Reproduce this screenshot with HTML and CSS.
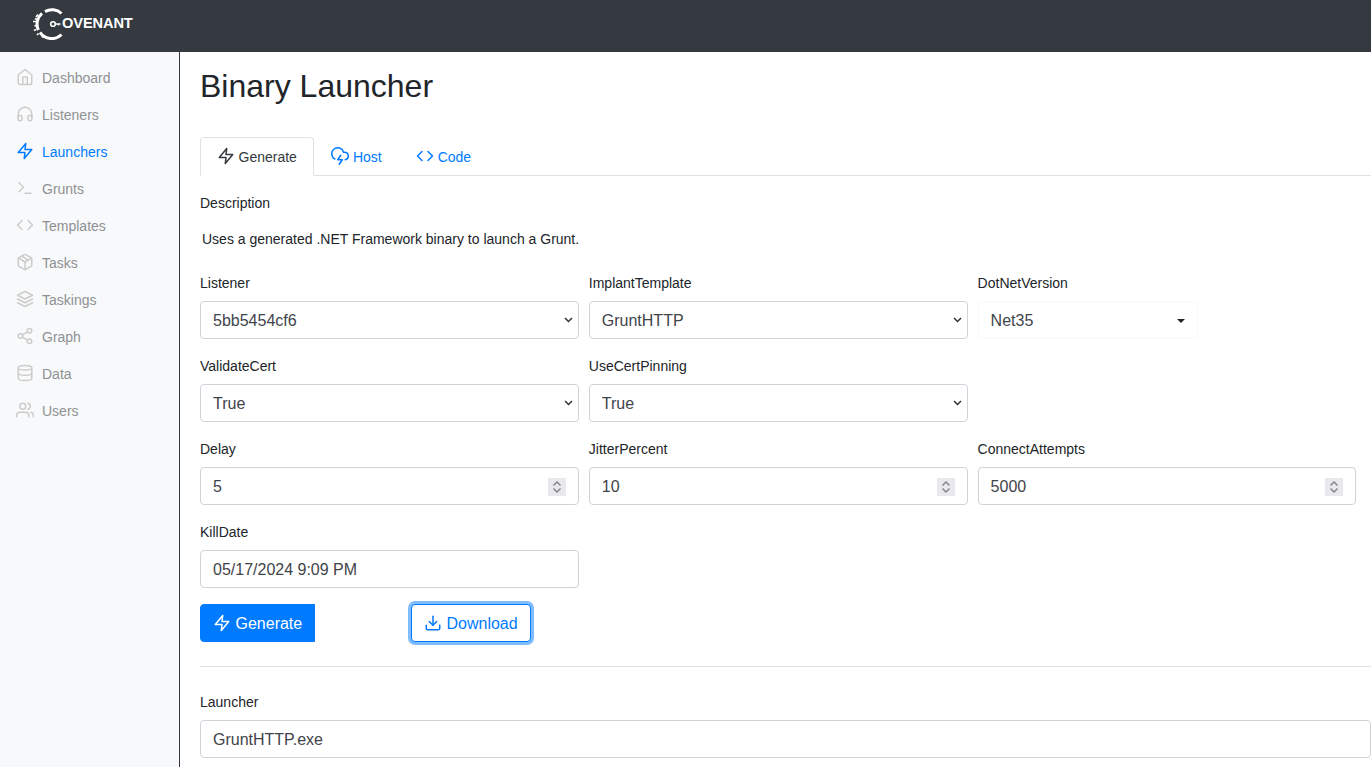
FILE: index.html
```html
<!DOCTYPE html>
<html lang="en">
<head>
    <meta charset="UTF-8">
    <title>Binary Launcher - Covenant</title>
    <link rel="stylesheet" href="styles.css">
</head>
<body>
    <header class="topbar">
        <a class="brand" href="#">
            <svg class="brand-mark" viewBox="0 0 32 32" width="32" height="32" fill="none" stroke="#fff">
                <path d="M29.5 5.5A14 14 0 0 0 13 3.6M10 5.4A14 14 0 0 0 6.4 22M8 24.4A14 14 0 0 0 29.5 26.5" stroke-width="3"/>
                <path d="M6 6.5l-2 2.5M3 10.5l2 1M1 13.5h3M2.5 18l3-1M4 21.5l-2 1M6.5 25.5l-1.5 1.5M11 28l-1 1.5" stroke-width="1.7"/>
                <circle cx="21" cy="16" r="2.3" stroke-width="1.6"/>
                <path d="M23 16h5.5M26.5 16v1.5" stroke-width="1.3"/>
            </svg>
            <span class="brand-text">OVENANT</span>
        </a>
    </header>
    <div class="layout">
        <nav class="sidebar">
            <a class="nav-link" href="#"><svg class="feather" viewBox="0 0 24 24"><path d="M3 9l9-7 9 7v11a2 2 0 0 1-2 2H5a2 2 0 0 1-2-2z"/><polyline points="9 22 9 12 15 12 15 22"/></svg>Dashboard</a>
            <a class="nav-link" href="#"><svg class="feather" viewBox="0 0 24 24"><path d="M3 18v-6a9 9 0 0 1 18 0v6"/><path d="M21 19a2 2 0 0 1-2 2h-1a2 2 0 0 1-2-2v-3a2 2 0 0 1 2-2h3zM3 19a2 2 0 0 0 2 2h1a2 2 0 0 0 2-2v-3a2 2 0 0 0-2-2H3z"/></svg>Listeners</a>
            <a class="nav-link active" href="#"><svg class="feather" viewBox="0 0 24 24"><polygon points="13 2 3 14 12 14 11 22 21 10 12 10 13 2"/></svg>Launchers</a>
            <a class="nav-link" href="#"><svg class="feather" viewBox="0 0 24 24"><polyline points="4 17 10 11 4 5"/><line x1="12" y1="19" x2="20" y2="19"/></svg>Grunts</a>
            <a class="nav-link" href="#"><svg class="feather" viewBox="0 0 24 24"><polyline points="16 18 22 12 16 6"/><polyline points="8 6 2 12 8 18"/></svg>Templates</a>
            <a class="nav-link" href="#"><svg class="feather" viewBox="0 0 24 24"><line x1="16.5" y1="9.4" x2="7.5" y2="4.21"/><path d="M21 16V8a2 2 0 0 0-1-1.73l-7-4a2 2 0 0 0-2 0l-7 4A2 2 0 0 0 3 8v8a2 2 0 0 0 1 1.73l7 4a2 2 0 0 0 2 0l7-4A2 2 0 0 0 21 16z"/><polyline points="3.27 6.96 12 12.01 20.73 6.96"/><line x1="12" y1="22.08" x2="12" y2="12"/></svg>Tasks</a>
            <a class="nav-link" href="#"><svg class="feather" viewBox="0 0 24 24"><polygon points="12 2 2 7 12 12 22 7 12 2"/><polyline points="2 17 12 22 22 17"/><polyline points="2 12 12 17 22 12"/></svg>Taskings</a>
            <a class="nav-link" href="#"><svg class="feather" viewBox="0 0 24 24"><circle cx="18" cy="5" r="3"/><circle cx="6" cy="12" r="3"/><circle cx="18" cy="19" r="3"/><line x1="8.59" y1="13.51" x2="15.42" y2="17.49"/><line x1="15.41" y1="6.51" x2="8.59" y2="10.49"/></svg>Graph</a>
            <a class="nav-link" href="#"><svg class="feather" viewBox="0 0 24 24"><ellipse cx="12" cy="5" rx="9" ry="3"/><path d="M21 12c0 1.66-4 3-9 3s-9-1.34-9-3"/><path d="M3 5v14c0 1.66 4 3 9 3s9-1.34 9-3V5"/></svg>Data</a>
            <a class="nav-link" href="#"><svg class="feather" viewBox="0 0 24 24"><path d="M17 21v-2a4 4 0 0 0-4-4H5a4 4 0 0 0-4 4v2"/><circle cx="9" cy="7" r="4"/><path d="M23 21v-2a4 4 0 0 0-3-3.87"/><path d="M16 3.13a4 4 0 0 1 0 7.75"/></svg>Users</a>
        </nav>
        <main class="content">
            <h1 class="page-title">Binary Launcher</h1>
            <ul class="tabs">
                <li class="tab active"><svg class="feather" viewBox="0 0 24 24"><polygon points="13 2 3 14 12 14 11 22 21 10 12 10 13 2"/></svg>Generate</li>
                <li class="tab"><svg class="feather" viewBox="0 0 24 24"><path d="M19 16.9A5 5 0 0 0 18 7h-1.26a8 8 0 1 0-11.62 9"/><polyline points="13 11 9 17 15 17 11 23"/></svg>Host</li>
                <li class="tab"><svg class="feather" viewBox="0 0 24 24"><polyline points="16 18 22 12 16 6"/><polyline points="8 6 2 12 8 18"/></svg>Code</li>
            </ul>
            <form class="launcher-form">
                <label class="field-label">Description</label>
                <p class="description">Uses a generated .NET Framework binary to launch a Grunt.</p>

                <div class="form-grid">
                    <div class="field">
                        <label class="field-label">Listener</label>
                        <select class="control"><option>5bb5454cf6</option></select>
                    </div>
                    <div class="field">
                        <label class="field-label">ImplantTemplate</label>
                        <select class="control"><option>GruntHTTP</option></select>
                    </div>
                    <div class="field">
                        <label class="field-label">DotNetVersion</label>
                        <button type="button" class="picker">Net35<span class="caret"></span></button>
                    </div>

                    <div class="field">
                        <label class="field-label">ValidateCert</label>
                        <select class="control"><option>True</option></select>
                    </div>
                    <div class="field">
                        <label class="field-label">UseCertPinning</label>
                        <select class="control"><option>True</option></select>
                    </div>
                    <div class="field"></div>

                    <div class="field">
                        <label class="field-label">Delay</label>
                        <input class="control" type="number" value="5">
                    </div>
                    <div class="field">
                        <label class="field-label">JitterPercent</label>
                        <input class="control" type="number" value="10">
                    </div>
                    <div class="field">
                        <label class="field-label">ConnectAttempts</label>
                        <input class="control" type="number" value="5000">
                    </div>

                    <div class="field">
                        <label class="field-label">KillDate</label>
                        <input class="control" type="text" value="05/17/2024 9:09 PM">
                    </div>
                </div>

                <div class="actions">
                    <button type="button" class="btn btn-primary"><svg class="feather" viewBox="0 0 24 24"><polygon points="13 2 3 14 12 14 11 22 21 10 12 10 13 2"/></svg>Generate</button>
                    <button type="button" class="btn btn-outline"><svg class="feather" viewBox="0 0 24 24"><path d="M21 15v4a2 2 0 0 1-2 2H5a2 2 0 0 1-2-2v-4"/><polyline points="7 10 12 15 17 10"/><line x1="12" y1="15" x2="12" y2="3"/></svg>Download</button>
                </div>

                <hr class="divider">

                <label class="field-label">Launcher</label>
                <input class="control" type="text" value="GruntHTTP.exe">
            </form>
        </main>
    </div>
</body>
</html>
```

FILE: styles.css
```css
* {
    box-sizing: border-box;
}
html, body {
    height: 100%;
}
body {
    margin: 0;
    overflow: hidden;
    font-family: "Liberation Sans", Arial, sans-serif;
    font-size: 14px;
    line-height: 21px;
    color: #212529;
    background-color: #fff;
}
a {
    text-decoration: none;
}

.topbar {
    height: 52px;
    background-color: #343a40;
    display: flex;
    align-items: center;
    padding-left: 32px;
    padding-bottom: 4px;
}
.brand {
    display: flex;
    align-items: center;
}
.brand-text {
    margin-left: -2px;
    padding-bottom: 2px;
    color: #fff;
    font-size: 14.6px;
    font-weight: 700;
    letter-spacing: -0.1px;
}

.layout {
    display: flex;
    height: calc(100% - 52px);
}
.sidebar {
    flex: 0 0 180px;
    padding-top: 8px;
    background-color: #f8f9fa;
    border-right: 1px solid #343a40;
}
.nav-link {
    display: flex;
    align-items: center;
    height: 37px;
    padding-left: 16px;
    color: #8f9194;
}
.nav-link .feather {
    width: 18px;
    height: 18px;
    margin-top: -3px;
    margin-right: 8px;
    color: #ccc;
}
.nav-link.active,
.nav-link.active .feather {
    color: #007bff;
}

.feather {
    fill: none;
    stroke: currentColor;
    stroke-width: 2;
    stroke-linecap: round;
    stroke-linejoin: round;
    flex-shrink: 0;
}

.content {
    flex: 1;
    min-width: 0;
    padding-left: 20px;
    overflow: hidden;
}
.page-title {
    margin: 14px 0 31px;
    font-size: 32px;
    font-weight: 500;
    line-height: 40px;
}

.tabs {
    display: flex;
    margin: 0 0 17px;
    padding: 0;
    list-style: none;
    border-bottom: 1px solid #dee2e6;
}
.tab {
    display: flex;
    align-items: center;
    height: 39px;
    margin-bottom: -1px;
    padding: 2px 16.5px 0 16px;
    color: #007bff;
    border: 1px solid transparent;
    border-radius: 4px 4px 0 0;
}
.tab .feather {
    width: 18px;
    height: 18px;
    margin-top: -4px;
    margin-right: 3.5px;
}
.tab.active {
    color: #343a40;
    background-color: #fff;
    border-color: #dee2e6 #dee2e6 #fff;
}

.field-label {
    display: block;
    margin-bottom: 7px;
}
.description {
    margin: 0 0 23px;
    padding: 8px 2px 0;
}

.form-grid {
    display: grid;
    grid-template-columns: repeat(3, 1fr);
    column-gap: 10px;
    row-gap: 17px;
    width: 1156.4px;
}
.control {
    display: block;
    width: 100%;
    height: 38px;
    padding: 7px 12px 5px;
    font-family: inherit;
    font-size: 16px;
    line-height: 24px;
    color: #3f444a;
    background-color: #fff;
    border: 1px solid #ced4da;
    border-radius: 4px;
}
select.control {
    appearance: none;
    -webkit-appearance: none;
    background-image: url("data:image/svg+xml,%3Csvg xmlns='http://www.w3.org/2000/svg' width='9' height='6'%3E%3Cpath d='M1 1l3.5 3.5L8 1' fill='none' stroke='%23333' stroke-width='1.5'/%3E%3C/svg%3E");
    background-repeat: no-repeat;
    background-position: right 5px center;
}
input[type=number]::-webkit-inner-spin-button {
    -webkit-appearance: none;
    opacity: 1;
    width: 18px;
    height: 18px;
    margin-top: 0;
    background: url("data:image/svg+xml,%3Csvg xmlns='http://www.w3.org/2000/svg' width='18' height='18'%3E%3Crect width='18' height='18' fill='%23e9e9ed'/%3E%3Cpath d='M5.5 7.5l3.5-3.5 3.5 3.5M5.5 10.5l3.5 3.5 3.5-3.5' fill='none' stroke='%23808088' stroke-width='1.4'/%3E%3C/svg%3E") no-repeat;
}
.picker {
    display: flex;
    align-items: center;
    justify-content: space-between;
    width: 220px;
    height: 38px;
    padding: 8px 12px 6px;
    font-family: inherit;
    font-size: 16px;
    color: #3f444a;
    background-color: #fff;
    border: 1px solid #f8f9fa;
    border-radius: 4px;
}
.caret {
    width: 0;
    height: 0;
    border-top: 4.8px solid #212529;
    border-left: 4.8px solid transparent;
    border-right: 4.8px solid transparent;
}

.actions {
    display: flex;
    margin-top: 16px;
}
.btn {
    display: flex;
    align-items: center;
    height: 38px;
    padding: 2px 12px 0;
    font-family: inherit;
    font-size: 16px;
    border: 1px solid #007bff;
    border-radius: 4px;
}
.btn .feather {
    width: 18px;
    height: 18px;
    margin-top: -2px;
    margin-right: 4.5px;
}
.btn-primary {
    width: 115px;
    color: #fff;
    background-color: #007bff;
    border-radius: 4px 0 0 4px;
}
.btn-outline {
    margin-left: 96px;
    width: 120px;
    color: #007bff;
    background-color: #fff;
    box-shadow: 0 0 0 3px rgba(0, 123, 255, 0.5);
}

.divider {
    margin: 24px 0 25px;
    border: 0;
    border-top: 1px solid #dee2e6;
}
```
